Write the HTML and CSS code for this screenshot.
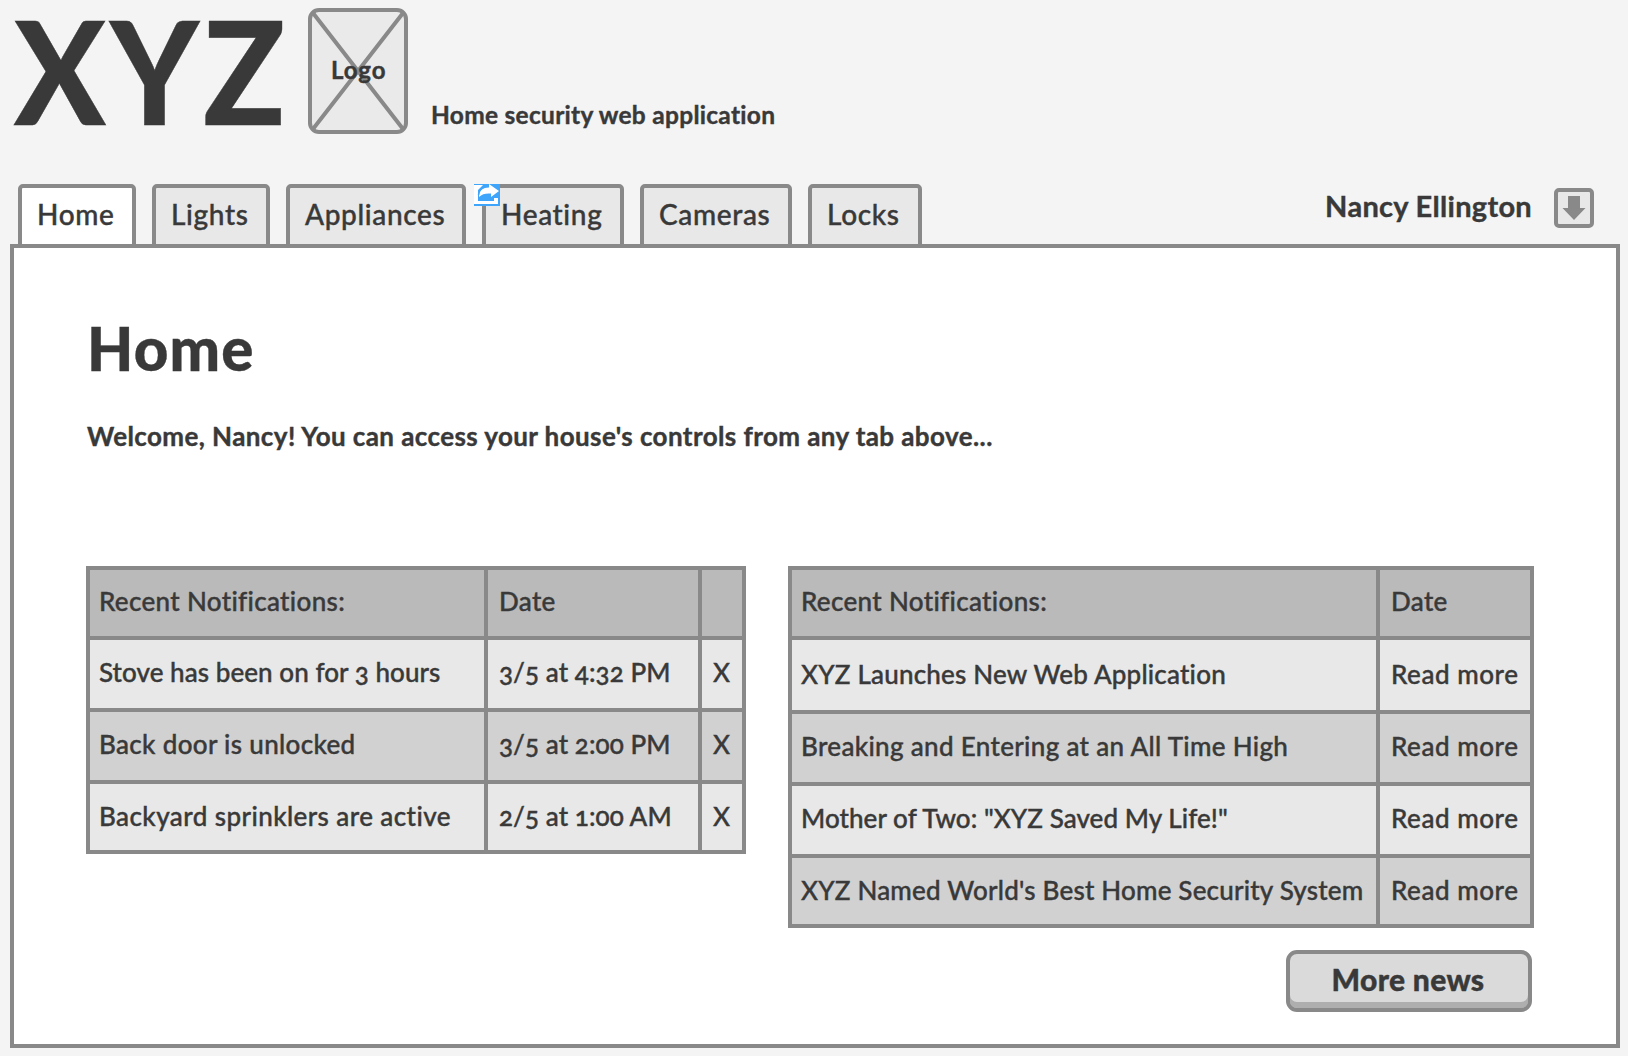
FILE: index.html
```html
<!DOCTYPE html>
<html lang="en">
<head>
<meta charset="utf-8">
<title>XYZ Home Security</title>
<link rel="stylesheet" href="styles.css">
</head>
<body>
<header class="masthead">
  <div class="brand">XYZ</div>
  <div class="logo">
    <svg class="logo-cross" width="100" height="126" viewBox="0 0 100 126">
      <rect x="2" y="2" width="96" height="122" rx="9" fill="#eaeaea" stroke="#898989" stroke-width="4"/>
      <path d="M5 5 95 121M95 5 5 121" stroke="#898989" stroke-width="4"/>
    </svg>
    <span class="logo-text">Logo</span>
  </div>
  <div class="tagline">Home security web application</div>
</header>
<div class="navbar">
  <nav class="tabs">
    <a class="tab tab-home active">Home</a>
    <a class="tab tab-lights">Lights</a>
    <a class="tab tab-appliances">Appliances</a>
    <a class="tab tab-heating">Heating
      <svg class="link-badge" width="26" height="22" viewBox="0 0 26 22">
        <rect width="26" height="22" fill="#3fa5fb"/>
        <path d="M0 1h9L4 6v11h16v-3h4v6H0z" fill="#fff"/>
        <path d="M5 13C5 6 9 3.500 15 3.500V0l10 7-8 6V9.500C12 9 8 10 5 13z" fill="#fff"/>
        <path d="M4.500 11C5 6 8 2.500 14 2.500" fill="none" stroke="#3fa5fb" stroke-width="1.500"/>
      </svg>
    </a>
    <a class="tab tab-cameras">Cameras</a>
    <a class="tab tab-locks">Locks</a>
  </nav>
  <div class="user">
    <span class="user-name">Nancy Ellington</span>
    <button class="user-menu" aria-label="Account menu">
      <svg width="24" height="24" viewBox="0 0 24 24"><path d="M6 0h12v12h5.500L12 24 .5 12H6z" fill="#898989"/></svg>
    </button>
  </div>
</div>
<main class="panel">
  <h1 class="title">Home</h1>
  <p class="welcome">Welcome, Nancy! You can access your house's controls from any tab above...</p>
  <div class="lists">
    <table class="grid alerts">
      <colgroup><col class="c-alert"><col class="c-when"><col class="c-close"></colgroup>
      <tr class="head"><td>Recent Notifications:</td><td>Date</td><td></td></tr>
      <tr><td class="tight">Stove has been on for 3 hours</td><td class="when">3/5 at 4:32 PM</td><td>X</td></tr>
      <tr class="alt"><td>Back door is unlocked</td><td class="when">3/5 at 2:00 PM</td><td>X</td></tr>
      <tr class="last"><td class="loose">Backyard sprinklers are active</td><td class="when">2/5 at 1:00 AM</td><td>X</td></tr>
    </table>
    <div class="news-block">
      <table class="grid news">
        <colgroup><col class="c-news"><col class="c-more"></colgroup>
        <tr class="head"><td>Recent Notifications:</td><td>Date</td></tr>
        <tr class="first"><td class="snug">XYZ Launches New Web Application</td><td class="link">Read more</td></tr>
        <tr class="alt"><td>Breaking and Entering at an All Time High</td><td class="link">Read more</td></tr>
        <tr><td class="tight">Mother of Two: "XYZ Saved My Life!"</td><td class="link">Read more</td></tr>
        <tr class="alt last"><td class="snug">XYZ Named World's Best Home Security System</td><td class="link">Read more</td></tr>
      </table>
      <button class="more">More news</button>
    </div>
  </div>
</main>
</body>
</html>
```
FILE: styles.css
```css
* { box-sizing: border-box; }
body {
  margin: 0;
  width: 1628px;
  height: 1056px;
  overflow: hidden;
  background: #f4f4f4;
  color: #393939;
  font-family: Lato, "Noto Sans", sans-serif;
  font-size: 26px;
  font-weight: 500;
  font-variant-numeric: oldstyle-nums;
  white-space: nowrap;
  -webkit-text-stroke: 0.4px #393939;
}
.masthead { display: flex; height: 184px; padding: 8px 0 0 14px; }
.brand {
  width: 294px;
  padding-top: 2px;
  font-size: 143px;
  font-weight: 900;
  line-height: 120px;
  letter-spacing: 4.500px;
  transform: scaleX(0.945);
  transform-origin: left;
}
.logo { position: relative; width: 100px; height: 126px; font-size: 24px; font-weight: 700; }
.logo-cross { display: block; }
.logo-text { position: absolute; left: 23px; top: 46px; line-height: 32px; letter-spacing: 0.9px; }
.tagline { padding: 91px 0 0 23px; font-size: 24.500px; font-weight: 700; line-height: 32px; letter-spacing: 0.28px; }
.navbar { display: flex; justify-content: space-between; height: 60px; padding: 0 34px 0 18px; }
.tabs { display: flex; gap: 16px; }
.tab {
  position: relative;
  flex: none;
  height: 64px;
  padding: 9px 0 0 15px;
  border: 4px solid #898989;
  border-radius: 5px 5px 2px 2px;
  background: #e8e8e8;
  font-size: 28px;
  line-height: 34px;
  letter-spacing: 0.65px;
}
.tab.active { background: #fff; }
.tab-home, .tab-lights { width: 118px; }
.tab-appliances { width: 180px; }
.tab-heating { width: 142px; }
.tab-cameras { width: 152px; }
.tab-locks { width: 114px; }
.link-badge { position: absolute; left: -12px; top: -4px; }
.user { display: flex; gap: 22px; padding-top: 4px; font-size: 29px; font-weight: 700; line-height: 36px; letter-spacing: 0.3px; }
.user-menu {
  width: 40px; height: 40px; padding: 4px 0 0; border: 4px solid #898989; border-radius: 5px;
  background: #e8e8e8; display: flex; justify-content: center;
}
.panel {
  width: 1610px;
  height: 804px;
  margin-left: 10px;
  padding: 70px 72px 0;
  border: 4px solid #898989;
  background: #fff;
}
.title { margin: 0; padding-left: 1px; font-size: 60px; font-weight: 900; line-height: 60px; letter-spacing: 1.200px; }
.welcome { margin: 40px 0 0; padding-left: 1px; font-weight: 700; line-height: 36px; letter-spacing: 0.41px; }
.lists { display: flex; gap: 42px; margin-top: 112px; align-items: flex-start; }
.grid { table-layout: fixed; border-collapse: separate; border-spacing: 4px; background: #898989; }
.grid td {
  height: 68px; padding: 0 0 4px 9px; background: #e8e8e8;
  line-height: 32px; letter-spacing: 0.33px; vertical-align: middle;
}
.grid .head td { height: 66px; padding-bottom: 5px; background: #bababa; }
.grid .alt td { background: #d1d1d1; }
.grid .first td { height: 70px; padding-bottom: 2px; }
.grid .last td { height: 66px; padding-bottom: 2px; }
.grid td + td { padding-left: 11px; }
.grid .tight { letter-spacing: 0.06px; }
.grid .snug { letter-spacing: 0.2px; }
.grid .loose { letter-spacing: 0.42px; }
.grid .when { letter-spacing: 0.08px; }
.grid .link { letter-spacing: 0.55px; }
.alerts { width: 660px; }
.news { width: 746px; }
.c-alert { width: 394px; }
.c-when { width: 210px; }
.c-close { width: 40px; }
.c-news { width: 584px; }
.c-more { width: 150px; }
.news-block { display: flex; flex-direction: column; width: 746px; }
.more {
  align-self: flex-end;
  width: 246px;
  height: 62px;
  margin: 22px 2px 0 0;
  padding: 0 2px 5px 0;
  border: 4px solid #898989;
  border-radius: 11px;
  background: #dadada;
  box-shadow: inset 0 -6px #aeaeae;
  color: inherit;
  font: 900 30px/36px Lato, sans-serif;
  letter-spacing: 0.35px;
}
```
